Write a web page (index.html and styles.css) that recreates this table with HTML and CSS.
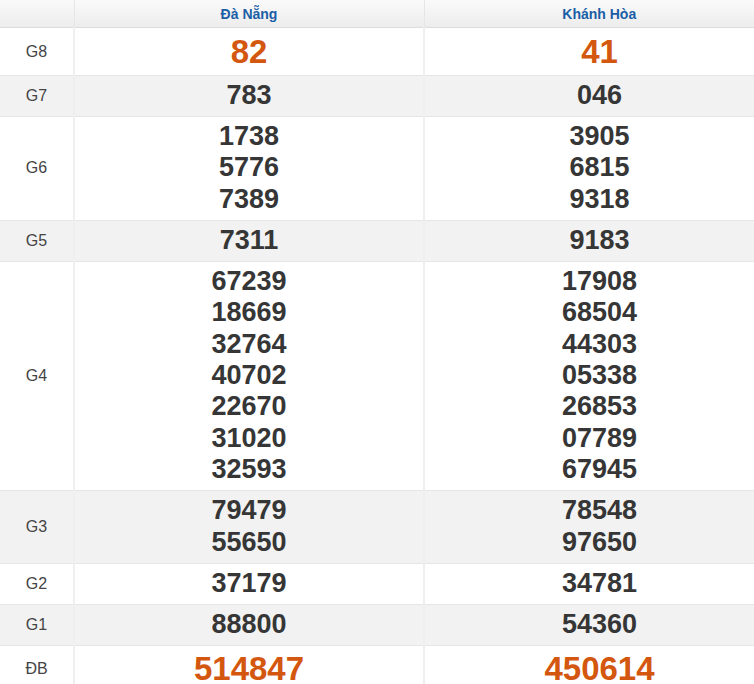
FILE: index.html
```html
<!DOCTYPE html>
<html lang="vi">
<head>
<meta charset="utf-8">
<title>Kết quả xổ số</title>
<link rel="stylesheet" href="styles.css">
</head>
<body>
<table class="kq">
  <colgroup>
    <col class="c-label">
    <col class="c-prov">
    <col class="c-prov">
  </colgroup>
  <thead>
    <tr>
      <th></th>
      <th>Đà Nẵng</th>
      <th>Khánh Hòa</th>
    </tr>
  </thead>
  <tbody>
    <tr>
      <td class="lbl">G8</td>
      <td class="num big">82</td>
      <td class="num big">41</td>
    </tr>
    <tr class="alt">
      <td class="lbl">G7</td>
      <td class="num">783</td>
      <td class="num">046</td>
    </tr>
    <tr>
      <td class="lbl">G6</td>
      <td class="num"><div>1738</div><div>5776</div><div>7389</div></td>
      <td class="num"><div>3905</div><div>6815</div><div>9318</div></td>
    </tr>
    <tr class="alt">
      <td class="lbl">G5</td>
      <td class="num">7311</td>
      <td class="num">9183</td>
    </tr>
    <tr>
      <td class="lbl">G4</td>
      <td class="num"><div>67239</div><div>18669</div><div>32764</div><div>40702</div><div>22670</div><div>31020</div><div>32593</div></td>
      <td class="num"><div>17908</div><div>68504</div><div>44303</div><div>05338</div><div>26853</div><div>07789</div><div>67945</div></td>
    </tr>
    <tr class="alt">
      <td class="lbl">G3</td>
      <td class="num"><div>79479</div><div>55650</div></td>
      <td class="num"><div>78548</div><div>97650</div></td>
    </tr>
    <tr>
      <td class="lbl">G2</td>
      <td class="num">37179</td>
      <td class="num">34781</td>
    </tr>
    <tr class="alt">
      <td class="lbl">G1</td>
      <td class="num">88800</td>
      <td class="num">54360</td>
    </tr>
    <tr>
      <td class="lbl">ĐB</td>
      <td class="num big">514847</td>
      <td class="num big">450614</td>
    </tr>
  </tbody>
</table>
</body>
</html>
```
FILE: styles.css
```css
html, body {
  margin: 0;
  padding: 0;
  overflow: hidden;
  background: #fff;
}

body {
  font-family: "Liberation Sans", Arial, sans-serif;
  color: #333;
}

.kq {
  width: 774px;
  border-collapse: collapse;
  table-layout: fixed;
}

.c-label { width: 74px; }
.c-prov { width: 350px; }

.kq th {
  height: 27px;
  padding: 0;
  background: linear-gradient(#fafafa, #ececec);
  border-bottom: 1px solid #dcdcdc;
  border-left: 1px solid #e6e6e6;
  color: #1b5ea6;
  font-size: 14px;
  font-weight: bold;
  text-align: center;
  vertical-align: middle;
}

.kq th:first-child { border-left: none; }

.kq td {
  border-bottom: 1px solid #e6e6e6;
  border-left: 2px solid #efefef;
  text-align: center;
  vertical-align: middle;
}

.kq td:first-child { border-left: none; }

.kq tr.alt td { background: #f2f2f2; }

.lbl {
  font-size: 16px;
  color: #444;
  padding: 0;
}

.num {
  font-size: 27px;
  font-weight: bold;
  line-height: 31.4px;
  color: #363636;
  padding: 4px 0 4.6px;
}

.num.big {
  font-size: 33px;
  line-height: 36px;
  color: #d4570f;
  padding: 5.5px 0;
}
```
